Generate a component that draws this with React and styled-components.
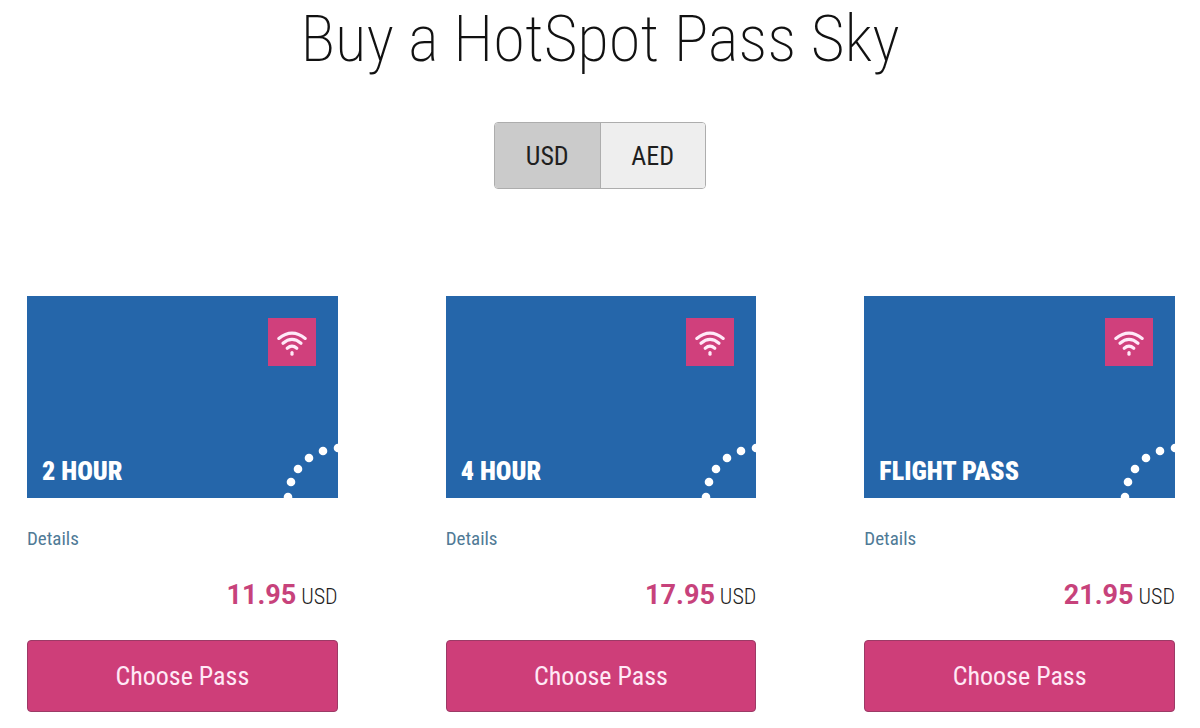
import React, { useState } from "react";
import styled, { createGlobalStyle } from "styled-components";

const narrow = `"Roboto Condensed", Roboto, sans-serif`;

const GlobalStyle = createGlobalStyle`
  *, *::before, *::after { box-sizing: border-box; }
  body {
    margin: 0;
    background: #fff;
    color: #262626;
    font-family: ${narrow};
  }
`;

const Page = styled.main`
  padding-bottom: 16px;
`;

const Title = styled.h1`
  margin: 0;
  padding-top: 3px;
  font-size: 65px;
  line-height: 72px;
  font-weight: 200;
  text-align: center;
  color: #111;
`;

const CurrencySwitch = styled.div`
  display: flex;
  width: 212px;
  margin: 47px auto 107px;
  border: 1px solid #adadad;
  border-radius: 4px;
  overflow: hidden;
`;

const CurrencyButton = styled.button`
  flex: 1;
  height: 65px;
  padding: 0;
  border: 0;
  font: 26px/32px ${narrow};
  color: #1f1f1f;
  background: ${(p) => (p.$active ? "#cbcbcb" : "#eeeeee")};
  cursor: pointer;

  & + & {
    border-left: 1px solid #adadad;
  }
`;

const PassGrid = styled.div`
  display: grid;
  grid-template-columns: repeat(3, minmax(0, 1fr));
  gap: 9vw;
  padding: 0 25px 0 27px;
`;

const Pass = styled.article`
  display: flex;
  flex-direction: column;
`;

const PassCover = styled.div`
  position: relative;
  display: flex;
  flex-direction: column;
  justify-content: space-between;
  height: 202px;
  padding: 22px 22px 11px 15px;
  background: #2566aa;
`;

const WifiBadge = styled.span`
  align-self: flex-end;
  display: flex;
  width: 48px;
  height: 48px;
  background: #d0407c;
`;

const PassName = styled.h2`
  margin: 0;
  font-size: 26px;
  line-height: 32px;
  font-weight: 900;
  color: #fff;
`;

const DotArc = styled.svg`
  position: absolute;
  right: 0;
  bottom: 0;
`;

const DetailsLink = styled.a`
  align-self: flex-start;
  margin-top: 29px;
  font-size: 19px;
  line-height: 24px;
  color: #4f7a96;
  text-decoration: none;
`;

const Price = styled.p`
  margin: 26px 0 25px;
  font-size: 22px;
  line-height: 36px;
  font-weight: 300;
  text-align: right;
  color: #222;
`;

const Amount = styled.strong`
  font-family: Roboto, sans-serif;
  font-size: 27px;
  font-weight: 700;
  color: #c7427b;
`;

const ChooseButton = styled.button`
  height: 72px;
  padding: 0;
  border: 1px solid #9c3a66;
  border-radius: 4px;
  background: #ce3e79;
  color: #ffe9f6;
  font: 26px/32px ${narrow};
  cursor: pointer;
`;

const currencies = ["USD", "AED"];

const passes = [
  { name: "2 HOUR", price: "11.95" },
  { name: "4 HOUR", price: "17.95" },
  { name: "FLIGHT PASS", price: "21.95" },
];

function WifiIcon() {
  return (
    <svg width="48" height="48" viewBox="0 0 48 48" fill="none" stroke="#ffe9f8" strokeWidth="3.2" strokeLinecap="round" aria-hidden="true">
      <path d="M10.8 20.4Q24 9.8 37.2 20.4" />
      <path d="M15 25.3Q24 17.6 33 25.3" />
      <path d="M19.2 30.2Q24 26.2 28.8 30.2" />
      <path d="M24 34.5V36.2" />
    </svg>
  );
}

const dots = [[10, 59], [13, 44], [20, 31], [31, 20], [45, 13], [60, 10]];

function PassCard({ name, price, currency }) {
  return (
    <Pass>
      <PassCover>
        <WifiBadge><WifiIcon /></WifiBadge>
        <PassName>{name}</PassName>
        <DotArc width="60" height="60" viewBox="0 0 60 60" fill="#fff" aria-hidden="true">
          {dots.map(([x, y]) => <circle key={x} cx={x} cy={y} r="4.3" />)}
        </DotArc>
      </PassCover>
      <DetailsLink href="#details">Details</DetailsLink>
      <Price><Amount>{price}</Amount> {currency}</Price>
      <ChooseButton type="button">Choose Pass</ChooseButton>
    </Pass>
  );
}

export default function App() {
  const [currency, setCurrency] = useState("USD");
  return (
    <>
      <GlobalStyle />
      <Page>
        <Title>Buy a HotSpot Pass Sky</Title>
        <CurrencySwitch role="group" aria-label="Currency">
          {currencies.map((c) => (
            <CurrencyButton key={c} type="button" $active={c === currency} aria-pressed={c === currency} onClick={() => setCurrency(c)}>
              {c}
            </CurrencyButton>
          ))}
        </CurrencySwitch>
        <PassGrid>
          {passes.map((p) => <PassCard key={p.name} {...p} currency={currency} />)}
        </PassGrid>
      </Page>
    </>
  );
}
